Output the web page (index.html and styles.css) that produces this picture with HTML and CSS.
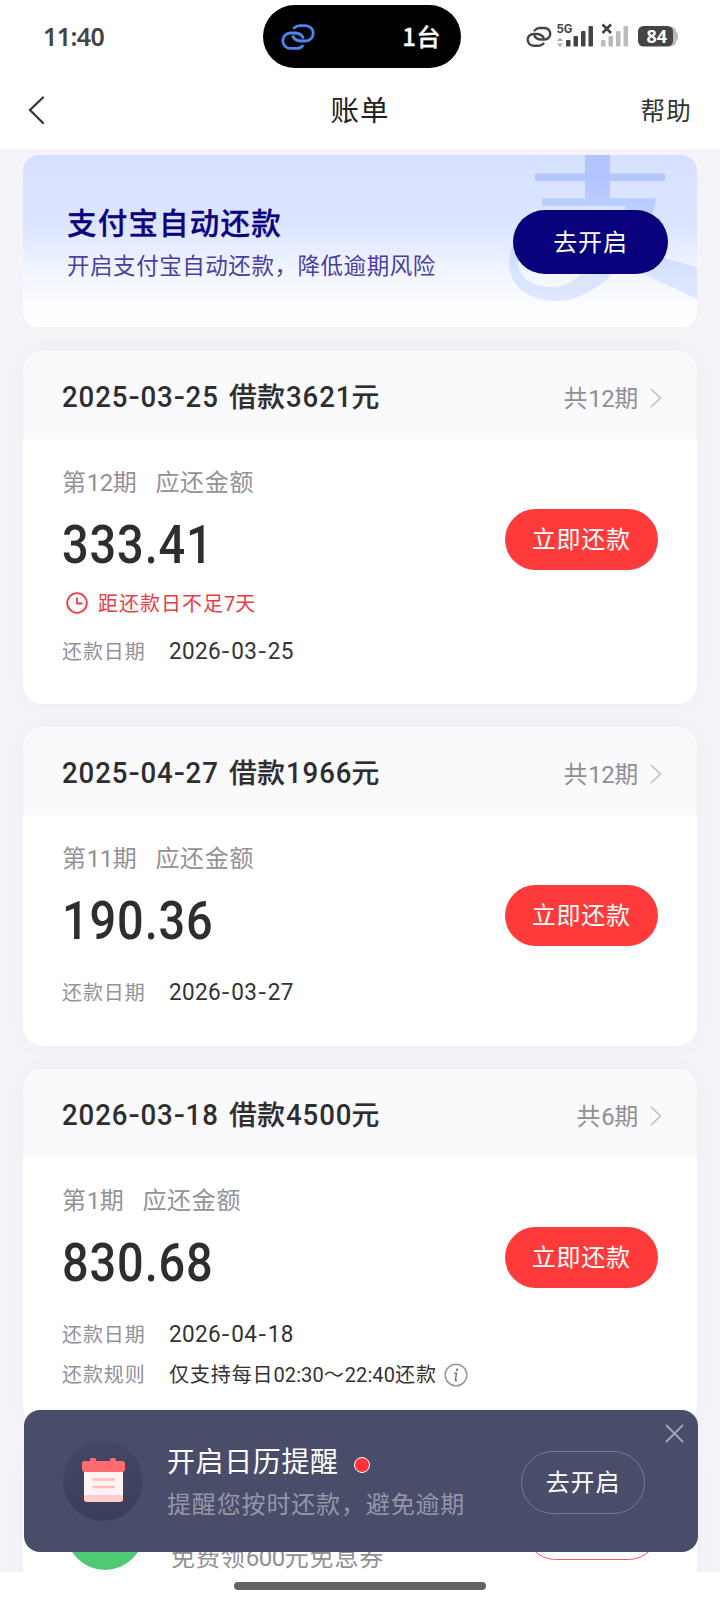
FILE: index.html
```html
<!DOCTYPE html>
<html lang="zh-CN">
<head>
<meta charset="utf-8">
<title>账单</title>
<link rel="stylesheet" href="styles.css">
</head>
<body>
<div class="screen">
  <header class="top">
    <div class="status">
      <span class="time">11:40</span>
      <div class="island">
        <svg width="34" height="26" viewBox="0 0 34 26" fill="none" stroke="#4a86ee" stroke-width="2.8" stroke-linecap="round"><path d="M13 4C14.500 2.500 16.500 1.600 19 1.600H24.500A7.700 7.700 0 0 1 24.500 17H20.500C16 17 13.500 15.500 12 12.500"/><path d="M21.500 22C20 23.700 18 24.400 15.500 24.400H9.500A7.700 7.700 0 0 1 9.500 9H13.500C18 9 20.500 10.500 22 13.500"/></svg>
        <span class="island-text">1台</span>
      </div>
      <svg class="status-icons" width="154" height="26" viewBox="0 0 154 26">
        <g fill="none" stroke="#444" stroke-width="2.4" stroke-linecap="round"><path d="M9.500 6.500C11 5 12.500 4 14.500 4H19.500A5.500 5.500 0 0 1 19.500 15.500H16C13 15.500 10.500 14 9.500 11.800"/><path d="M18.500 19.500C17 21 15.500 21.700 13.500 21.700H8.500A5.700 5.700 0 0 1 8.500 10H11.500C15 10 17.500 11.500 18.500 13.800"/></g>
        <text class="net" x="31.500" y="9">5G</text>
        <path d="M32 17L35 13.500L38 17ZM32 19.500L35 23L38 19.500Z" fill="#aaa"/>
        <g fill="#444"><rect x="41" y="16" width="4.500" height="6.500" rx="1"/><rect x="48.500" y="12" width="4.500" height="10.500" rx="1"/><rect x="56" y="7" width="4.500" height="15.500" rx="1"/><rect x="63.500" y="2" width="4.500" height="20.500" rx="1"/></g>
        <path d="M77.500 0.500L86 9M86 0.500L77.500 9" stroke="#444" stroke-width="2.600"/>
        <g fill="#bbb"><rect x="76" y="16" width="4.500" height="6.500" rx="1"/><rect x="83.500" y="12" width="4.500" height="10.500" rx="1"/><rect x="91" y="7" width="4.500" height="15.500" rx="1"/><rect x="98.500" y="2" width="4.500" height="20.500" rx="1"/></g>
        <path d="M145 2.500Q151 3 151 7.500L153 10V15L151 17.500Q151 22 145 22.500Z" fill="#bbb"/>
        <rect x="113" y="2" width="35" height="20.500" rx="5.500" fill="#444"/>
        <text class="batt" x="121.500" y="18.500">84</text>
      </svg>
    </div>
    <nav class="nav">
      <svg class="back" width="18" height="30" viewBox="0 0 18 30" fill="none" stroke="#333" stroke-width="2.200" stroke-linecap="round"><path d="M15 2.500L2 15L15 28"/></svg>
      <h1 class="nav-title">账单</h1>
      <span class="help">帮助</span>
    </nav>
  </header>

  <main class="content">
    <section class="banner">
      <svg class="zhi" width="190" height="172" viewBox="0 0 190 172">
        <defs><linearGradient id="zg" x1="0" y1="0" x2="0" y2="150" gradientUnits="userSpaceOnUse"><stop offset="0.150" stop-color="#b3c5ff"/><stop offset="0.400" stop-color="#bed0ff"/><stop offset="0.800" stop-color="#d9e4fe"/><stop offset="1" stop-color="#dfe9fe"/></linearGradient></defs>
        <path fill="url(#zg)" d="M78 0H103V18.500H158V26H103V43.500H149C148 55 141 76 128 92C145 99 168 107 190 112V144C165 132 142 122 114 109C98 129 75 146 50 146C20 146 2 130 2 107C2 82 24 71 48 71C68 71 85 76 104 82C111 72 116 62 119 51H35V43.500H78V26H28V18.500H78ZM92 98C77 91 59 84 44 84C24 84 11 95 11 107C11 122 24 132 44 132C62 132 79 119 92 98Z"/>
      </svg>
      <div class="banner-text">
        <h2 class="banner-title">支付宝自动还款</h2>
        <p class="banner-sub">开启支付宝自动还款，降低逾期风险</p>
      </div>
      <button class="banner-btn">去开启</button>
    </section>

    <section class="card">
      <div class="card-head">
        <h3 class="loan"><span class="n day">2025<i>-</i>03<i>-</i>25</span><b>借款</b><span class="n sum">3621</span><b>元</b></h3>
        <span class="terms">共<span class="n">12</span>期</span>
        <svg class="chev" width="12" height="20" viewBox="0 0 12 20"><path d="M1 1L10.500 10L1 19"/></svg>
      </div>
      <div class="card-body">
        <div class="term"><span>第<span class="n">12</span>期</span><span>应还金额</span></div>
        <div class="amount-row"><strong class="amount">333.41</strong><button class="pay">立即还款</button></div>
        <div class="alert"><svg width="22" height="22" viewBox="0 0 22 22" fill="none" stroke="#ee3a42" stroke-width="1.800"><circle cx="11" cy="11" r="9.800"/><path d="M11 5.500V11.500H16.500"/></svg><span>距还款日不足<span class="n">7</span>天</span></div>
        <div class="row"><span class="label">还款日期</span><span class="date">2026<i>-</i>03<i>-</i>25</span></div>
      </div>
    </section>

    <section class="card">
      <div class="card-head">
        <h3 class="loan"><span class="n day">2025<i>-</i>04<i>-</i>27</span><b>借款</b><span class="n sum">1966</span><b>元</b></h3>
        <span class="terms">共<span class="n">12</span>期</span>
        <svg class="chev" width="12" height="20" viewBox="0 0 12 20"><path d="M1 1L10.500 10L1 19"/></svg>
      </div>
      <div class="card-body plain">
        <div class="term"><span>第<span class="n">11</span>期</span><span>应还金额</span></div>
        <div class="amount-row"><strong class="amount">190.36</strong><button class="pay">立即还款</button></div>
        <div class="row"><span class="label">还款日期</span><span class="date">2026<i>-</i>03<i>-</i>27</span></div>
      </div>
    </section>

    <section class="card">
      <div class="card-head">
        <h3 class="loan"><span class="n day">2026<i>-</i>03<i>-</i>18</span><b>借款</b><span class="n sum">4500</span><b>元</b></h3>
        <span class="terms">共<span class="n">6</span>期</span>
        <svg class="chev" width="12" height="20" viewBox="0 0 12 20"><path d="M1 1L10.500 10L1 19"/></svg>
      </div>
      <div class="card-body plain">
        <div class="term"><span>第<span class="n">1</span>期</span><span>应还金额</span></div>
        <div class="amount-row"><strong class="amount">830.68</strong><button class="pay">立即还款</button></div>
        <div class="row"><span class="label">还款日期</span><span class="date">2026<i>-</i>04<i>-</i>18</span></div>
        <div class="row"><span class="label">还款规则</span><span class="rule">仅支持每日<span class="n">02:30</span>～<span class="n">22:40</span>还款</span>
          <svg class="info" width="24" height="24" viewBox="0 0 24 24"><circle cx="12" cy="12" r="10.800" fill="none" stroke="#999" stroke-width="1.500"/><circle cx="13" cy="6.700" r="1.200" fill="#777"/><path d="M10.200 10.200H12.500L11.400 17.500H13" fill="none" stroke="#777" stroke-width="1.500"/></svg></div>
      </div>
    </section>

    <section class="card promo">
      <span class="promo-icon"></span>
      <span class="promo-text">免费领<span class="n">600</span>元免息券</span>
      <span class="promo-btn"></span>
    </section>
  </main>

  <footer class="home"><span class="home-bar"></span></footer>

  <aside class="toast">
    <span class="cal">
      <svg width="80" height="80" viewBox="0 0 80 80">
        <rect x="21" y="24" width="39" height="37" rx="3" fill="#ffcdca"/><rect x="21" y="24" width="39" height="30" fill="#fff3f3"/>
        <path d="M21 20H27V18.500Q27 17 29 17H31Q33 17 33 18.500V20H47V18.500Q47 17 49 17H51Q53 17 53 18.500V20H59Q62 20 62 23V28Q62 31 59 31H22Q19 31 19 28V23Q19 20 21 20Z" fill="#ff6b6f"/>
        <path d="M30.500 38.500H50.500M30.500 46H50.500" stroke="#ffbcbc" stroke-width="2.600" stroke-linecap="round"/>
      </svg>
    </span>
    <div class="toast-text">
      <div class="toast-title">开启日历提醒<span class="dot"></span></div>
      <div class="toast-sub">提醒您按时还款，避免逾期</div>
    </div>
    <button class="toast-btn">去开启</button>
    <svg class="close" width="19" height="19" viewBox="0 0 19 19" stroke="#a5a7b8" stroke-width="1.800" stroke-linecap="round"><path d="M1.500 1.500L17.500 17.500M17.500 1.500L1.500 17.500"/></svg>
  </aside>
</div>
</body>
</html>
```

FILE: styles.css
```css
* { box-sizing: border-box; }
body { margin: 0; font-family: "Noto Sans CJK SC", sans-serif; }
h1, h2, h3, p { margin: 0; font-weight: 400; }
button { border: 0; padding: 0 0 4px; font-family: inherit; font-size: 24px; letter-spacing: 0.8px; color: #fff; }
i { font-style: normal; }
svg { display: block; flex: none; }

.screen { position: relative; width: 720px; height: 1600px; overflow: hidden; background: #f4f4f8; display: flex; flex-direction: column; }

/* Status bar and navigation */
.top { height: 149px; flex: none; background: #fff; }
.status { height: 73px; display: grid; grid-template-columns: 263px 198px 1fr; align-items: center; }
.time { padding-left: 43px; padding-bottom: 1px; font: 600 25px/36px "Noto Sans", sans-serif; letter-spacing: -0.6px; color: #444; }
.island { height: 63px; border-radius: 32px; background: #000; display: flex; align-items: center; justify-content: space-between; padding: 0 20px 0 18px; }
.island-text { color: #fff; font-size: 24px; line-height: 34px; padding-bottom: 2px; font-weight: 500; letter-spacing: 0.5px; -webkit-text-stroke: 0.3px #fff; }
.status-icons { margin-left: 64px; overflow: visible; }
.net { font: 700 11.500px Inter, sans-serif; fill: #444; }
.batt { font: 700 18px "Noto Sans", sans-serif; fill: #fff; }
.nav { height: 76px; display: grid; grid-template-columns: 1fr auto 1fr; align-items: center; padding: 0 28px 3px 28px; }
.nav-title { font-size: 28.500px; line-height: 40px; padding-bottom: 1px; letter-spacing: 1px; color: #222; }
.help { justify-self: end; font-size: 24.500px; line-height: 40px; letter-spacing: 1.200px; color: #333; }

.content { flex: 1; min-height: 0; overflow: hidden; padding: 6px 23px 0; display: flex; flex-direction: column; gap: 23px; }

/* Auto-repay banner */
.banner { position: relative; height: 172px; margin-bottom: 1px; flex: none; border-radius: 16px; overflow: hidden; padding: 0 29px 0 44px; display: flex; justify-content: space-between; align-items: flex-start; background: linear-gradient(#d7e1ff 0%, #dce5ff 40%, #f1f5ff 68%, #fcfdff 88%, #fff 100%); }
.zhi { position: absolute; right: 0; top: 0; }
.banner-text { padding-top: 44px; }
.banner-title { font-size: 29.500px; line-height: 44px; letter-spacing: 1.200px; color: #0b0080; font-weight: 500; -webkit-text-stroke: 0.3px #0b0080; }
.banner-sub { font-size: 22.500px; line-height: 40px; letter-spacing: 0.550px; color: #4b3ea5; padding-top: 1px; }
.banner-btn { position: relative; margin-top: 55px; width: 155px; height: 64px; border-radius: 32px; background: #09007c; }

/* Bill cards */
.card { flex: none; border-radius: 20px; background: #fff; box-shadow: 0 0 20px rgba(60, 60, 100, 0.035); }
.card-head { height: 88px; border-radius: 20px 20px 0 0; background: #fafafc; display: flex; align-items: center; padding: 1px 35px 0 39px; }
.loan { flex: 1; display: flex; align-items: baseline; color: #2e2e30; line-height: 44px; font-size: 27.800px; }
.loan b { font-weight: 500; letter-spacing: 0.500px; -webkit-text-stroke: 0.2px #2e2e30; }
.loan .n { font: 500 30px/44px Roboto, sans-serif; letter-spacing: 1px; white-space: nowrap; transform: scaleX(0.92); transform-origin: 0 50%; }
.loan .day { width: 167px; }
.loan .sum { width: 66px; }
.loan i { display: inline-block; width: 13px; text-align: center; letter-spacing: 0; transform: scaleX(1.2); }
.terms { font-size: 24px; line-height: 40px; letter-spacing: 0.800px; color: #909094; padding-top: 5px; }
.terms .n, .term .n, .promo-text .n { font-family: Roboto, sans-serif; letter-spacing: -0.500px; }
.chev { margin: 4px 0 0 11px; fill: none; stroke: #bdbdc2; stroke-width: 1.500px; }
.card-body { padding: 22px 39px 32px; }
.term { height: 44px; line-height: 40px; font-size: 24px; letter-spacing: 0.700px; color: #929297; display: flex; gap: 18px; }
.amount-row { height: 80px; display: flex; justify-content: space-between; align-items: flex-start; }
.amount { font: 500 53px/80px Roboto, sans-serif; letter-spacing: 1px; color: #2e2e30; transform: scaleX(0.885); transform-origin: 0 50%; }
.pay { margin-top: 4px; width: 153.500px; height: 61px; border-radius: 31px; background: #ff3a3a; }
.alert { height: 38px; padding: 0 0 2px 4px; display: flex; align-items: center; gap: 10px; color: #ee3a42; font-size: 20px; line-height: 36px; letter-spacing: 1px; margin-bottom: 9px; }
.alert .n { font-family: Roboto, sans-serif; letter-spacing: 0; }
.row { height: 40px; display: flex; align-items: center; }
.plain { padding-bottom: 33px; }
.plain .amount-row { margin-bottom: 12px; }
.label { width: 107px; font-size: 20px; line-height: 38px; padding-bottom: 2px; letter-spacing: 0.900px; color: #929297; }
.date { font: 400 24.500px/38px Roboto, sans-serif; padding-bottom: 2px; letter-spacing: 0.350px; color: #333; transform: scaleX(0.92); transform-origin: 0 50%; }
.date i { display: inline-block; width: 11.300px; text-align: center; transform: scaleX(1.2); }
.rule { font-size: 20px; line-height: 38px; padding-bottom: 2px; letter-spacing: 0.900px; color: #333; }
.rule .n { font: 400 20px Roboto, sans-serif; letter-spacing: 0.100px; }
.info { margin: 0 0 1px 7px; }

/* Coupon card, mostly hidden by the reminder */
.promo { height: 200px; display: flex; align-items: flex-start; padding: 41px 38px 0 43px; }
.promo-icon { width: 78px; height: 78px; border-radius: 50%; background: #4fc973; }
.promo-text { flex: 1; padding: 44px 0 0 27px; font-size: 24px; line-height: 40px; letter-spacing: 0.900px; color: #909094; }
.promo-btn { width: 134px; height: 61px; margin-top: 7px; border: 1.500px solid #ee5a60; border-radius: 31px; }

/* Gesture area */
.home { height: 28px; flex: none; background: #fff; display: flex; justify-content: center; align-items: flex-start; padding-top: 10px; }
.home-bar { width: 252px; height: 8px; border-radius: 4px; background: #636363; }

/* Floating calendar reminder */
.toast { position: absolute; left: 24px; top: 1410px; width: 674px; height: 142px; border-radius: 16px; background: #4a4d69; display: flex; align-items: center; padding: 0 53px 0 39px; }
.cal { width: 80px; height: 80px; border-radius: 50%; background: linear-gradient(#444764, #3a3d5c); flex: none; }
.toast-text { flex: 1; padding-left: 24px; }
.toast-title { display: flex; align-items: center; font-size: 28px; line-height: 43px; padding-bottom: 1px; letter-spacing: 0.600px; color: #fff; }
.dot { width: 16px; height: 16px; margin: 8px 0 0 15px; border: 1.500px solid #fff; border-radius: 50%; background: #ff3338; }
.toast-sub { font-size: 24px; line-height: 40px; letter-spacing: 0.850px; color: #9496a8; }
.toast-btn { width: 124px; height: 63px; border: 1px solid #797b92; border-radius: 32px; background: transparent; margin-top: 2px; }
.close { position: absolute; right: 14px; top: 14px; }
```
